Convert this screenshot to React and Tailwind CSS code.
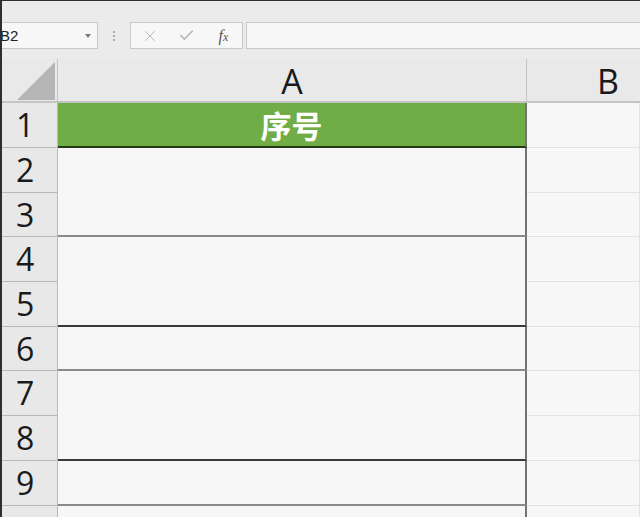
import { X, Check } from 'lucide-react';

const rowNums = [1, 2, 3, 4, 5, 6, 7, 8, 9];

export default function App() {
    return (
        <div className="w-[640px] h-[517px] overflow-hidden bg-[#ebebeb] border-t border-l-2 border-[#2e2e2e] font-['Open_Sans','Noto_Sans_CJK_SC',sans-serif] text-[#1a1a1a]">
            {/* Formula bar */}
            <div className="h-[58px] flex items-start pt-[21px]">
                <div className="w-[98px] h-[27px] -ml-[2px] flex items-center justify-between bg-[#f7f7f7] border border-l-0 border-[#c9c9c9] pr-[6px]">
                    <span className="text-[15px] leading-none text-[#222] font-['Liberation_Sans',sans-serif]">B2</span>
                    <span className="w-0 h-0 border-l-[3px] border-r-[3px] border-t-[4px] border-l-transparent border-r-transparent border-t-[#777]" />
                </div>
                <div className="w-[32px] h-[27px] flex flex-col items-center justify-center gap-[2px]">
                    <span className="w-[2px] h-[2px] bg-[#a9a9a9]" />
                    <span className="w-[2px] h-[2px] bg-[#a9a9a9]" />
                    <span className="w-[2px] h-[2px] bg-[#a9a9a9]" />
                </div>
                <div className="w-[113px] h-[27px] flex items-center bg-[#f7f7f7] border border-[#c9c9c9]">
                    <div className="w-[37px] flex justify-center">
                        <X className="w-[18px] h-[18px] text-[#b8b8b8]" strokeWidth={1.3} />
                    </div>
                    <div className="w-[37px] flex justify-center">
                        <Check className="w-[17px] h-[17px] text-[#b8b8b8]" strokeWidth={2.4} />
                    </div>
                    <div className="w-[37px] flex justify-center">
                        <span className="italic font-['Liberation_Serif',serif] text-[16px] leading-none text-[#555]">
                            f<span className="text-[12px]">x</span>
                        </span>
                    </div>
                </div>
                <div className="ml-[3px] flex-1 h-[27px] bg-[#f7f7f7] border border-r-0 border-[#c9c9c9]" />
            </div>

            {/* Sheet grid */}
            <div className="grid grid-cols-[56px_469px_113px] grid-rows-[44px_45px_45px_44px_45px_45px_44px_45px_45px_45px_11px]">
                {/* Column header */}
                <div className="relative border-r border-b-2 border-[#c4c4c4] bg-[#e9e9e9]">
                    <svg className="absolute left-[15px] top-[3px]" width="38" height="38" viewBox="0 0 38 38">
                        <polygon points="38,0 38,38 0,38" fill="#b5b5b5" />
                    </svg>
                </div>
                <div className="flex items-center justify-center border-r border-b-2 border-[#c4c4c4] bg-[#e9e9e9] text-[34px] leading-none pt-[2px]">
                    A
                </div>
                <div className="flex items-center pl-[70px] border-b-2 border-[#c4c4c4] bg-[#e9e9e9] text-[34px] leading-none pt-[2px]">
                    B
                </div>

                {/* Row numbers */}
                {rowNums.map((n, i) => (
                    <div
                        key={n}
                        style={{ gridRow: i + 2, gridColumn: 1 }}
                        className="flex items-center pl-[14px] border-r border-b border-[#b9b9b9] bg-[#e8e8e8] text-[32px] leading-none"
                    >
                        {n}
                    </div>
                ))}
                <div className="row-start-11 col-start-1 border-r border-[#b9b9b9] bg-[#e8e8e8]" />

                {/* Column A (merged cells) */}
                <div className="row-start-2 col-start-2 flex items-center justify-center bg-[#70ad47] border-b-2 border-r-2 border-r-[#737373] border-b-[#243a16] text-white font-bold text-[31px] leading-none font-['Noto_Sans_CJK_SC',sans-serif]">
                    序号
                </div>
                <div className="row-start-3 row-span-2 col-start-2 bg-[#f7f7f7] border-b-2 border-r-2 border-r-[#737373] border-b-[#8a8a8a]" />
                <div className="row-start-5 row-span-2 col-start-2 bg-[#f7f7f7] border-b-2 border-r-2 border-r-[#737373] border-b-[#3a3a3a]" />
                <div className="row-start-7 col-start-2 bg-[#f7f7f7] border-b-2 border-r-2 border-r-[#737373] border-b-[#8a8a8a]" />
                <div className="row-start-8 row-span-2 col-start-2 bg-[#f7f7f7] border-b-2 border-r-2 border-r-[#737373] border-b-[#3a3a3a]" />
                <div className="row-start-10 col-start-2 bg-[#f7f7f7] border-b-2 border-r-2 border-r-[#737373] border-b-[#8a8a8a]" />
                <div className="row-start-11 col-start-2 bg-[#f7f7f7] border-r-2 border-r-[#737373]" />

                {/* Column B */}
                {rowNums.map((n, i) => (
                    <div
                        key={'b' + n}
                        style={{ gridRow: i + 2, gridColumn: 3 }}
                        className="bg-[#f7f7f7] border-b border-r border-[#e2e2e2]"
                    />
                ))}
                <div className="row-start-11 col-start-3 bg-[#f7f7f7] border-r border-[#e2e2e2]" />
            </div>
        </div>
    );
}
